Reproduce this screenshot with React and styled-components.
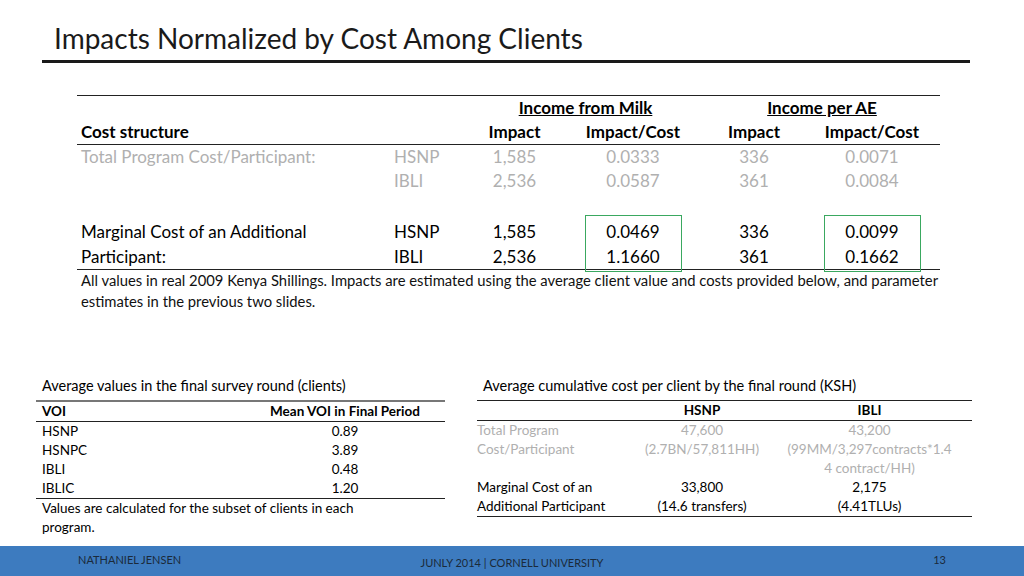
import React from 'react';
import styled, { createGlobalStyle } from 'styled-components';

const Global = createGlobalStyle`
  html, body { margin: 0; padding: 0; background: #fff; }
  body { font-family: Lato, "Open Sans", sans-serif; color: #000; }
`;

const Slide = styled.div`
  width: 1024px;
  height: 576px;
  display: flex;
  flex-direction: column;
  overflow: hidden;
`;

const Title = styled.h1`
  margin: 20px 54px 0 42px;
  padding: 0 0 4px 12px;
  font-weight: 400;
  font-size: 28px;
  line-height: 36px;
  color: #1a1a1a;
  border-bottom: 3px solid #1a1a1a;
  width: 916px;
`;

const Main = styled.div`
  margin: 32px 0 0 77px;
  width: 863px;
  border-top: 1.5px solid #222;
  font-size: 17px;
`;

const cols = '313px 77px 95px 142px 100px 136px';

const Row = styled.div`
  display: grid;
  grid-template-columns: ${cols};
  line-height: 24px;
  color: ${p => (p.$faded ? '#b0b0b0' : '#000')};
  font-weight: ${p => (p.$bold ? 700 : 400)};
  border-bottom: ${p => (p.$rule ? '1.5px solid #222' : 'none')};
  margin-top: ${p => p.$mt || 0}px;
`;

const Cell = styled.div`
  padding-left: ${p => (p.$left ? '4px' : 0)};
  text-align: ${p => (p.$left ? 'left' : 'center')};
`;

const Under = styled.span`
  text-decoration: underline;
  grid-column: ${p => p.$span};
  text-align: center;
`;

const Stack = styled.div`
  display: flex;
  flex-direction: column;
  align-items: ${p => (p.$left ? 'flex-start' : 'center')};
  padding-left: ${p => (p.$left ? '4px' : 0)};
`;

const Box = styled.div`
  width: 97px;
  border: 1.5px solid #3aa860;
  display: flex;
  flex-direction: column;
  align-items: center;
  margin: -4px 0 -3px;
  padding-top: 3px;
  height: 57px;
  box-sizing: border-box;
`;

const Note = styled.p`
  margin: 0;
  padding-left: 4px;
  font-size: 14.8px;
  line-height: 21px;
  color: #111;
`;

const Bottom = styled.div`
  display: flex;
  justify-content: space-between;
  margin: 64px 52px 0 36px;
  font-size: 13.5px;
`;

const Panel = styled.div`
  width: ${p => p.$w}px;
`;

const Caption = styled.div`
  font-size: 14.5px;
  padding-left: ${p => p.$pad || 0}px;
  margin-bottom: 4px;
  line-height: 20px;
`;

const SmallRow = styled.div`
  display: grid;
  grid-template-columns: ${p => p.$cols};
  line-height: 19px;
  color: ${p => (p.$faded ? '#b0b0b0' : '#000')};
  font-weight: ${p => (p.$bold ? 700 : 400)};
  border-top: ${p => p.$top || 'none'};
  border-bottom: ${p => p.$bottom || 'none'};
  padding-left: ${p => (p.$flush ? 0 : 6)}px;
`;

const Center = styled.span`
  text-align: center;
`;

const SmallNote = styled.div`
  padding: 0 60px 0 6px;
  line-height: 19px;
`;

const Footer = styled.div`
  margin-top: auto;
  height: 30px;
  background: #3d7bbf;
  display: grid;
  grid-template-columns: 1fr 1fr 1fr;
  align-items: center;
  font-size: 11px;
  color: #1b2a3a;
  padding: 0 78px;
  text-transform: uppercase;
`;

const FootCell = styled.div`
  text-align: ${p => p.$align};
  margin-top: ${p => p.$mt || 0}px;
`;

const leftCols = '1fr 200px';
const rightCols = '160px 130px 1fr';

export default function App() {
  return (
    <Slide>
      <Global />
      <Title>Impacts Normalized by Cost Among Clients</Title>
      <Main>
        <Row $bold>
          <Cell /><Cell /><Under $span="3 / 5">Income from Milk</Under><Under $span="5 / 7">Income per AE</Under>
        </Row>
        <Row $bold $rule>
          <Cell $left>Cost structure</Cell><Cell /><Cell>Impact</Cell><Cell>Impact/Cost</Cell><Cell>Impact</Cell><Cell>Impact/Cost</Cell>
        </Row>
        <Row $faded>
          <Cell $left>Total Program Cost/Participant:</Cell><Cell $left>HSNP</Cell><Cell>1,585</Cell><Cell>0.0333</Cell><Cell>336</Cell><Cell>0.0071</Cell>
        </Row>
        <Row $faded>
          <Cell /><Cell $left>IBLI</Cell><Cell>2,536</Cell><Cell>0.0587</Cell><Cell>361</Cell><Cell>0.0084</Cell>
        </Row>
        <Row $mt={26} $rule style={{ lineHeight: '25px' }}>
          <Stack $left><span>Marginal Cost of an Additional</span><span>Participant:</span></Stack>
          <Stack $left><span>HSNP</span><span>IBLI</span></Stack>
          <Stack><span>1,585</span><span>2,536</span></Stack>
          <Stack><Box><span>0.0469</span><span>1.1660</span></Box></Stack>
          <Stack><span>336</span><span>361</span></Stack>
          <Stack><Box><span>0.0099</span><span>0.1662</span></Box></Stack>
        </Row>
        <Note>
          All values in real 2009 Kenya Shillings. Impacts are estimated using the average client value and costs provided below, and parameter estimates in the previous two slides.
        </Note>
      </Main>
      <Bottom>
        <Panel $w={409}>
          <Caption $pad={6}>Average values in the final survey round (clients)</Caption>
          <SmallRow $cols={leftCols} $bold $top="2.5px solid #777" $bottom="1.5px solid #222">
            <span>VOI</span><Center>Mean VOI in Final Period</Center>
          </SmallRow>
          {[['HSNP', '0.89'], ['HSNPC', '3.89'], ['IBLI', '0.48'], ['IBLIC', '1.20']].map(([a, b], i) => (
            <SmallRow key={a} $cols={leftCols} $bottom={i === 3 ? '1.5px solid #222' : 'none'}>
              <span>{a}</span><Center>{b}</Center>
            </SmallRow>
          ))}
          <SmallNote>Values are calculated for the subset of clients in each program.</SmallNote>
        </Panel>
        <Panel $w={495}>
          <Caption $pad={6}>Average cumulative cost per client by the final round (KSH)</Caption>
          <SmallRow $flush $cols={rightCols} $bold $top="1.5px solid #222" $bottom="1.5px solid #222">
            <span /><Center>HSNP</Center><Center>IBLI</Center>
          </SmallRow>
          <SmallRow $flush $cols={rightCols} $faded>
            <span>Total Program<br />Cost/Participant</span>
            <Center>47,600<br />(2.7BN/57,811HH)</Center>
            <Center>43,200<br />(99MM/3,297contracts*1.4<br />4 contract/HH)</Center>
          </SmallRow>
          <SmallRow $flush $cols={rightCols} $bottom="1.5px solid #222">
            <span>Marginal Cost of an<br />Additional Participant</span>
            <Center>33,800<br />(14.6 transfers)</Center>
            <Center>2,175<br />(4.41TLUs)</Center>
          </SmallRow>
        </Panel>
      </Bottom>
      <Footer>
        <FootCell $align="left" $mt={-4}>Nathaniel Jensen</FootCell>
        <FootCell $align="center" $mt={2}>Junly 2014 | Cornell University</FootCell>
        <FootCell $align="right" $mt={-4}>13</FootCell>
      </Footer>
    </Slide>
  );
}
